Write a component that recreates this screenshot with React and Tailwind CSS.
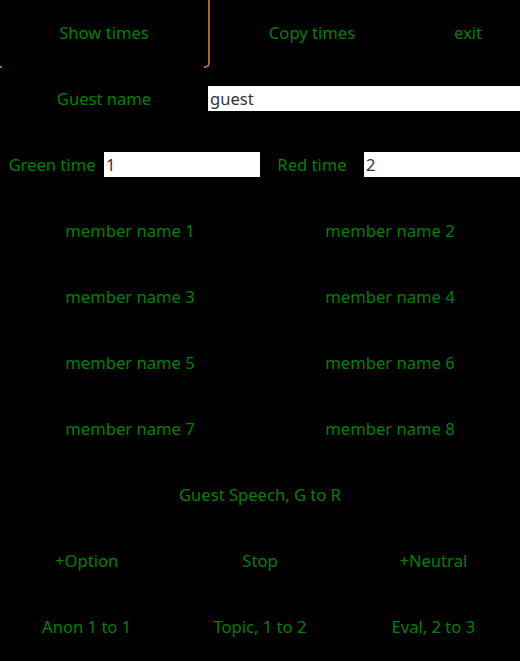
import React from 'react';

const green = 'text-[#008000]';

function Cell({ children, className = '' }) {
  return (
    <div className={`flex items-center justify-center h-[66px] ${green} ${className}`}>
      {children}
    </div>
  );
}

function Field({ value, className = '' }) {
  return (
    <div className={`h-[66px] pt-[20px] ${className}`}>
      <input
        readOnly
        value={value}
        className="w-full h-[25px] bg-white px-[2px] text-[#333333] outline-none"
      />
    </div>
  );
}

export default function App() {
  const members = [1, 2, 3, 4, 5, 6, 7, 8];
  return (
    <div className="w-[520px] h-[661px] bg-black overflow-hidden text-[16.6px] font-['Noto_Sans',sans-serif]">
      <div className="grid grid-cols-[208px_208px_104px]">
        <div className="relative">
          <Cell>Show times</Cell>
          <span className="absolute right-[-2px] top-[-10px] w-[6px] h-[78px] border-r-2 border-b-2 border-[#b5613a] rounded-br-[5px]" />
          <span className="absolute left-0 top-[66px] w-[2px] h-[2px] bg-[#b5613a]" />
        </div>
        <Cell>Copy times</Cell>
        <Cell>exit</Cell>
      </div>

      <div className="grid grid-cols-[208px_312px]">
        <Cell>Guest name</Cell>
        <Field value="guest" />
      </div>

      <div className="grid grid-cols-[104px_156px_104px_156px]">
        <Cell>Green time</Cell>
        <Field value="1" />
        <Cell>Red time</Cell>
        <Field value="2" />
      </div>

      <div className="grid grid-cols-2">
        {members.map((n) => (
          <Cell key={n}>member name {n}</Cell>
        ))}
      </div>

      <Cell>Guest Speech, G to R</Cell>

      <div className="grid grid-cols-3">
        <Cell>+Option</Cell>
        <Cell>Stop</Cell>
        <Cell>+Neutral</Cell>
        <Cell>Anon 1 to 1</Cell>
        <Cell>Topic, 1 to 2</Cell>
        <Cell>Eval, 2 to 3</Cell>
      </div>
    </div>
  );
}
